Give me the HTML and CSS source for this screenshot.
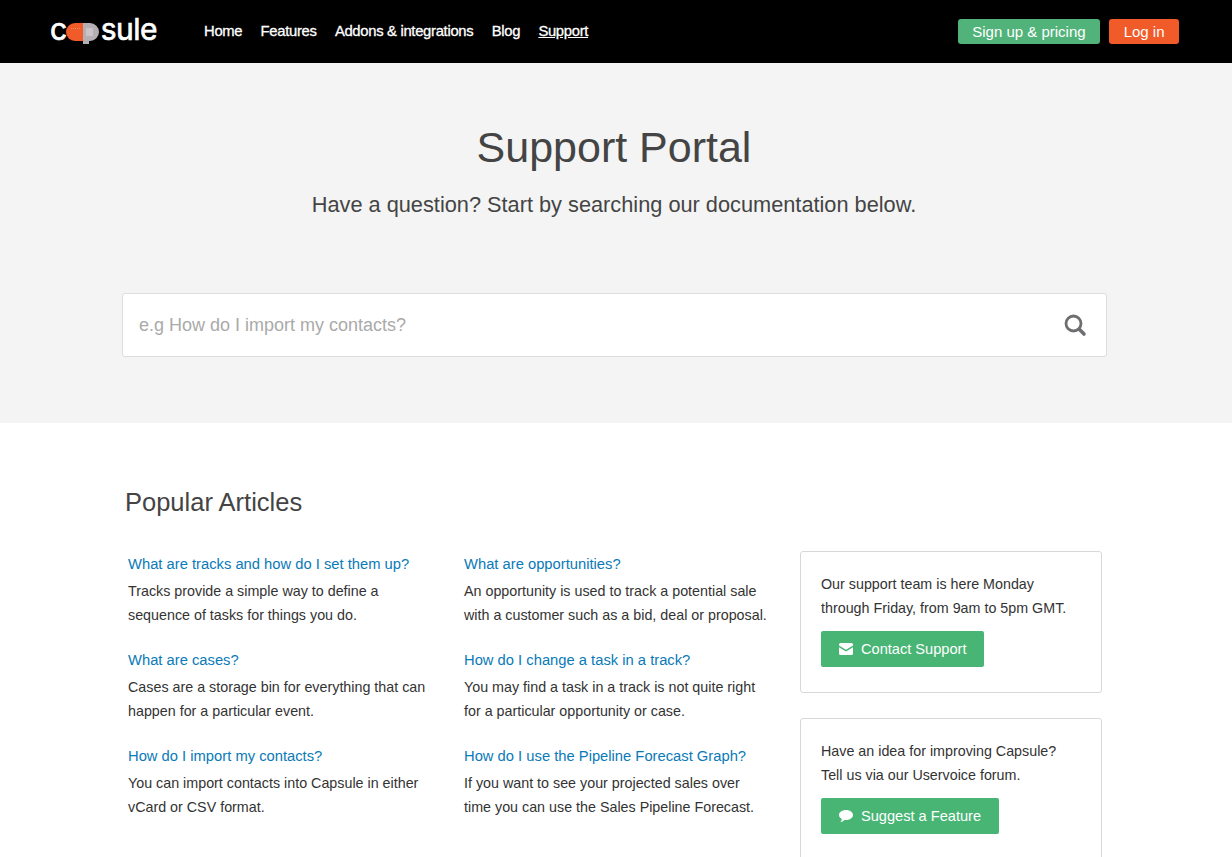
FILE: index.html
```html
<!DOCTYPE html>

<html lang="en">

<head>
  <meta charset="utf-8">
  <title>Support Portal</title>
  <link rel="stylesheet" href="styles.css">
</head>

<body>
  <div class="page">
    <header class="topbar">
      <a class="logo" href="#">
        <span>c</span>
        <svg class="logoPill" width="33" height="21" viewBox="0 0 33 21">
          <path d="M17 0H9A9 9 0 0 0 9 18H17Z" fill="#f15a29"/>
          <path d="M17 0H24A9 9 0 0 1 24 18H23V21H17Z" fill="#b5aeb3"/>
          <path d="M20 5H27V13H20Z" fill="#c9c4c8"/>
          <path d="M5 5.500H15" stroke="#f58a55" stroke-width="1" stroke-dasharray="1 1"/>
        </svg>
        <span>sule</span>
      </a>
      <nav class="mainNav">
        <a href="#">Home</a>
        <a href="#">Features</a>
        <a href="#">Addons &amp; integrations</a>
        <a href="#">Blog</a>
        <a class="current" href="#">Support</a>
      </nav>
      <div class="topButtons">
        <a class="topBtn green" href="#">Sign up &amp; pricing</a>
        <a class="topBtn orange" href="#">Log in</a>
      </div>
    </header>

    <section class="hero">
      <h1>Support Portal</h1>
      <p class="lead">Have a question? Start by searching our documentation below.</p>
      <div class="searchBox">
        <span class="placeholder">e.g How do I import my contacts?</span>
        <svg width="24" height="24" viewBox="0 0 24 24" fill="none" stroke="#6f6d70" stroke-linecap="round">
          <circle cx="10.500" cy="10.500" r="7.500" stroke-width="2.800"/>
          <path d="M16.500 16.500L21 21" stroke-width="3.600"/>
        </svg>
      </div>
    </section>

    <main class="content">
      <h2>Popular Articles</h2>
      <div class="columns">
        <div class="articles">
          <article>
            <a href="#">What are tracks and how do I set them up?</a>
            <p>Tracks provide a simple way to define a sequence of tasks for things you do.</p>
          </article>
          <article>
            <a href="#">What are opportunities?</a>
            <p>An opportunity is used to track a potential sale with a customer such as a bid, deal or proposal.</p>
          </article>
          <article>
            <a href="#">What are cases?</a>
            <p>Cases are a storage bin for everything that can happen for a particular event.</p>
          </article>
          <article>
            <a href="#">How do I change a task in a track?</a>
            <p>You may find a task in a track is not quite right for a particular opportunity or case.</p>
          </article>
          <article>
            <a href="#">How do I import my contacts?</a>
            <p>You can import contacts into Capsule in either vCard or CSV format.</p>
          </article>
          <article>
            <a href="#">How do I use the Pipeline Forecast Graph?</a>
            <p>If you want to see your projected sales over time you can use the Sales Pipeline Forecast.</p>
          </article>
        </div>
        <aside class="sidebar">
          <div class="card">
            <p>Our support team is here Monday through Friday, from 9am to 5pm GMT.</p>
            <a class="cardBtn" href="#">
              <svg width="14" height="12" viewBox="0 0 14 12" fill="#fff">
                <path d="M1.500 0H12.500A1.500 1.500 0 0 1 14 1.500V2.500L7 6.800L0 2.500V1.500A1.500 1.500 0 0 1 1.500 0Z"/>
                <path d="M0 4.200L7 8.500L14 4.200V10.500A1.500 1.500 0 0 1 12.500 12H1.500A1.500 1.500 0 0 1 0 10.500Z"/>
              </svg>
              Contact Support
            </a>
          </div>
          <div class="card">
            <p>Have an idea for improving Capsule? Tell us via our Uservoice forum.</p>
            <a class="cardBtn" href="#">
              <svg width="14" height="12" viewBox="0 0 14 12" fill="#fff">
                <path d="M7 0C10.900 0 14 2.200 14 5C14 7.800 10.900 10 7 10C6.400 10 5.900 10 5.400 9.900C4.400 11 3 11.800 1.300 12C2.200 11.200 2.800 10.200 2.900 9.100C1.100 8.200 0 6.700 0 5C0 2.200 3.100 0 7 0Z"/>
              </svg>
              Suggest a Feature
            </a>
          </div>
        </aside>
      </div>
    </main>
  </div>
</body>

</html>
```

FILE: styles.css
```css
html,
body {
  margin: 0;
  padding: 0;
}

body {
  background-color: white;
  color: #333;
  font-family: 'Liberation Sans', Arial, sans-serif;
  font-size: 14.3px;
}

a {
  text-decoration: none;
}

.page {
  height: 100vh;
  overflow: hidden;
}

.topbar {
  align-items: center;
  background-color: black;
  display: flex;
  height: 63px;
  padding: 0 53px 0 50px;
}

.logo {
  align-items: center;
  color: white;
  display: flex;
  flex: none;
  font-family: Inter, sans-serif;
  font-size: 30px;
  height: 63px;
  letter-spacing: -0.5px;
  -webkit-text-stroke: 0.7px white;
  width: 154px;
}

.logo span {
  margin-bottom: 5px;
}

.logoPill {
  flex: none;
  margin: 4px 2px 0 -1px;
}

.mainNav {
  display: flex;
  gap: 18.3px;
  margin-top: -1px;
}

.mainNav a {
  color: white;
  font-size: 14.8px;
  letter-spacing: -0.3px;
  -webkit-text-stroke: 0.3px white;
}

.mainNav .current {
  text-decoration: underline;
}

.topButtons {
  display: flex;
  gap: 9px;
  margin-left: auto;
}

.topBtn {
  border-radius: 3px;
  color: white;
  font-size: 15px;
  line-height: 25px;
  padding: 0 14.5px;
}

.green {
  background-color: #51b37a;
}

.orange {
  background-color: #f15a29;
}

.hero {
  background-color: #f4f4f4;
  box-sizing: border-box;
  height: 360px;
  padding-top: 58px;
  text-align: center;
}

h1 {
  color: #444;
  font-size: 43px;
  font-weight: normal;
  line-height: 52px;
  margin: 0 4px 0 0;
}

.lead {
  color: #444;
  font-size: 21.75px;
  line-height: 30px;
  margin: 17px 4px 0 0;
}

.searchBox {
  align-items: center;
  background-color: white;
  border: 1px solid #ddd;
  border-radius: 3px;
  box-sizing: border-box;
  display: flex;
  height: 64px;
  justify-content: space-between;
  margin: 73px 125px 0 122px;
  padding: 0 19px 0 16px;
}

.placeholder {
  color: #aaa;
  font-size: 18px;
}

.content {
  padding: 62px 130px 0 125px;
}

h2 {
  color: #444;
  font-size: 25.5px;
  font-weight: normal;
  line-height: 34px;
  margin: 0;
}

.columns {
  align-items: flex-start;
  display: flex;
  margin-top: 32px;
}

.articles {
  box-sizing: border-box;
  display: grid;
  flex: none;
  grid-template-columns: 336px 336px;
  padding: 1px 0 0 3px;
  row-gap: 21px;
  width: 675px;
}

article a {
  color: #0a7ab8;
  display: block;
  font-size: 14.75px;
  line-height: 24px;
}

article p {
  line-height: 24px;
  margin: 3px 0 0;
  width: 304px;
}

.sidebar {
  display: flex;
  flex: none;
  flex-direction: column;
  gap: 25px;
  width: 302px;
}

.card {
  border: 1px solid #d8d8d8;
  border-radius: 3px;
  box-sizing: border-box;
  flex: none;
  height: 142px;
  padding: 20px;
}

.card p {
  line-height: 24px;
  margin: 0 0 11px;
  max-width: 256px;
}

.cardBtn {
  align-items: center;
  background-color: #48b575;
  border-radius: 2px;
  color: white;
  display: inline-flex;
  font-size: 14.6px;
  gap: 8px;
  height: 36px;
  padding: 0 18px;
}
```
